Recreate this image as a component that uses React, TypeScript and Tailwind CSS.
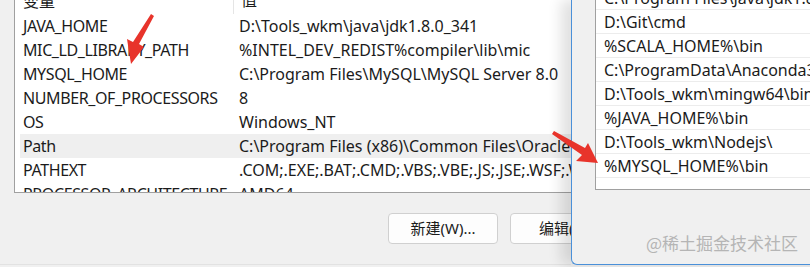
const leftRows: [string, string][] = [
  ["JAVA_HOME", "D:\\Tools_wkm\\java\\jdk1.8.0_341"],
  ["MIC_LD_LIBRARY_PATH", "%INTEL_DEV_REDIST%compiler\\lib\\mic"],
  ["MYSQL_HOME", "C:\\Program Files\\MySQL\\MySQL Server 8.0"],
  ["NUMBER_OF_PROCESSORS", "8"],
  ["OS", "Windows_NT"],
  ["Path", "C:\\Program Files (x86)\\Common Files\\Oracle\\Java\\javapath"],
  ["PATHEXT", ".COM;.EXE;.BAT;.CMD;.VBS;.VBE;.JS;.JSE;.WSF;.WSH;.MSC"],
  ["PROCESSOR_ARCHITECTURE", "AMD64"],
];

const pathRows = [
  "C:\\Program Files\\Java\\jdk1.8.0_341\\bin",
  "D:\\Git\\cmd",
  "%SCALA_HOME%\\bin",
  "C:\\ProgramData\\Anaconda3\\Scripts",
  "D:\\Tools_wkm\\mingw64\\bin",
  "%JAVA_HOME%\\bin",
  "D:\\Tools_wkm\\Nodejs\\",
  "%MYSQL_HOME%\\bin",
  "",
];

const font = { fontFamily: '"Noto Sans", "Noto Sans CJK SC", sans-serif' };

const App = () => {
  return (
    <div
      className="relative w-[810px] h-[267px] bg-[#f0f0f0] flex overflow-hidden text-[16px] text-[#1b1b1b]"
      style={font}
    >
      {/* left dialog */}
      <div className="w-[571px] shrink-0 flex flex-col border-b border-[#e2e2e2] h-[265px]">
        <div className="ml-[14px] w-[600px] h-[193px] bg-white border-l border-b border-[#a0a0a0] overflow-hidden">
          <div className="-mt-[12px] pl-[5px]">
            <div className="flex h-[26px] items-center">
              <div className="w-[213px] pl-[3px]">变量</div>
              <div className="h-full border-l border-[#e5e5e5] pl-[7px]">值</div>
            </div>
            {leftRows.map(([name, value]) => (
              <div
                key={name}
                className={
                  name === "Path"
                    ? "flex h-[24px] items-center whitespace-nowrap bg-[#efefef]"
                    : "flex h-[24px] items-center whitespace-nowrap"
                }
              >
                <div className="w-[219px] pl-[3px] shrink-0 tracking-[-0.4px]">{name}</div>
                <div>{value}</div>
              </div>
            ))}
          </div>
        </div>
        <div className="flex gap-[12px] pl-[388px] mt-[20px]">
          <button className="w-[110px] h-[31px] shrink-0 bg-[#fdfdfd] border border-[#d0d0d0] rounded-[4px] text-[15px]">
            新建(W)...
          </button>
          <button className="w-[110px] h-[31px] shrink-0 bg-[#fdfdfd] border border-[#d0d0d0] rounded-[4px] text-[15px] text-left pl-[28px]">
            编辑(E)...
          </button>
        </div>
      </div>

      {/* right dialog */}
      <div className="flex-1 h-[265px] bg-[#f0f0f0] border-l border-b border-[#4a90d9] rounded-bl-[6px] shadow-[-10px_0_14px_rgba(0,0,0,0.12)] z-10">
        <div className="ml-[23px] h-[190px] bg-white border-l border-b border-[#a0a0a0] overflow-hidden">
          <div className="-mt-[14px]">
            {pathRows.map((p, i) => (
              <div
                key={i}
                className="h-[24px] flex items-center pl-[8px] whitespace-nowrap border-b border-[#ececec]"
              >
                {p}
              </div>
            ))}
          </div>
        </div>
      </div>

      {/* watermark */}
      <div
        className="absolute right-[12px] bottom-[12px] text-[17px] text-[#b5b5b5] z-20"
        style={{ fontFamily: '"Noto Sans CJK SC", sans-serif' }}
      >
        @稀土掘金技术社区
      </div>

      {/* red arrows */}
      <svg className="absolute inset-0 z-30 pointer-events-none" width="810" height="267">
        <polygon points="151,14 154,16 139,44 144,47 131,64 127,39 133,42" fill="#e8342b" />
        <polygon points="552,134 554,131 585,148 588,143 598,163 576,161 582,155" fill="#e8342b" />
      </svg>
    </div>
  );
};

export default App;
